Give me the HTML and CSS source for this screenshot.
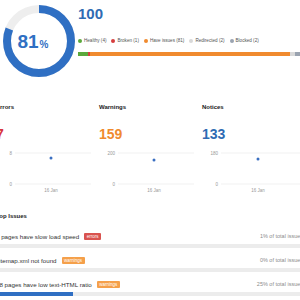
FILE: index.html
```html
<!DOCTYPE html>
<html lang="en">
<head>
  <meta charset="UTF-8" />
  <meta name="viewport" content="width=device-width, initial-scale=1" />
  <title>Site Audit Overview</title>
  <link rel="stylesheet" href="styles.css">
</head>
<body>
  <!-- Site health and crawled pages -->
  <div class="summary">
    <div class="donut">
      <svg width="72" height="72" viewBox="0 0 72 72">
        <circle cx="36" cy="36" r="32" fill="none" stroke="#eeeeee" stroke-width="8" />
        <circle cx="36" cy="36" r="32" fill="none" stroke="#2f6fc3" stroke-width="8"
                stroke-dasharray="162.86 201.06" transform="rotate(-90 36 36)" />
      </svg>
      <div class="donut-label">
        <span class="donut-value">81<span class="donut-unit">%</span></span>
      </div>
    </div>
    <div class="pages">
      <div class="pages-total">100</div>
      <div class="legend">
        <span class="legend-item"><i class="dot c-healthy"></i>Healthy (4)</span>
        <span class="legend-item"><i class="dot c-broken"></i>Broken (1)</span>
        <span class="legend-item"><i class="dot c-issues"></i>Have issues (81)</span>
        <span class="legend-item"><i class="dot c-redirected"></i>Redirected (2)</span>
        <span class="legend-item"><i class="dot c-blocked"></i>Blocked (2)</span>
      </div>
      <div class="pages-bar">
        <span class="c-healthy" style="width: 4.4%"></span>
        <span class="c-broken" style="width: 1.1%"></span>
        <span class="c-issues" style="width: 90%"></span>
        <span class="c-redirected" style="width: 2.2%"></span>
        <span class="c-blocked" style="width: 2.3%"></span>
      </div>
    </div>
  </div>

  <!-- Errors / warnings / notices -->
  <div class="stats">
    <div class="stat">
      <h3 class="stat-title">Errors</h3>
      <div class="stat-value errors">7</div>
      <svg class="stat-chart" width="103" height="50" viewBox="0 0 103 50">
        <line x1="19" y1="8" x2="95" y2="8" class="grid" />
        <line x1="19" y1="39" x2="95" y2="39" class="grid" />
        <text x="16" y="9.6" class="axis" text-anchor="end">8</text>
        <text x="16" y="40.6" class="axis" text-anchor="end">0</text>
        <text x="55" y="46.5" class="axis" text-anchor="middle">16 Jan</text>
        <circle cx="55" cy="13" r="1.5" class="point" />
      </svg>
    </div>
    <div class="stat">
      <h3 class="stat-title">Warnings</h3>
      <div class="stat-value warnings">159</div>
      <svg class="stat-chart" width="103" height="50" viewBox="0 0 103 50">
        <line x1="19" y1="8" x2="95" y2="8" class="grid" />
        <line x1="19" y1="39" x2="95" y2="39" class="grid" />
        <text x="16" y="9.6" class="axis" text-anchor="end">200</text>
        <text x="16" y="40.6" class="axis" text-anchor="end">0</text>
        <text x="55" y="46.5" class="axis" text-anchor="middle">16 Jan</text>
        <circle cx="55" cy="15" r="1.5" class="point" />
      </svg>
    </div>
    <div class="stat">
      <h3 class="stat-title">Notices</h3>
      <div class="stat-value notices">133</div>
      <svg class="stat-chart" width="103" height="50" viewBox="0 0 103 50">
        <line x1="19" y1="8" x2="103" y2="8" class="grid" />
        <line x1="19" y1="39" x2="103" y2="39" class="grid" />
        <text x="16" y="9.6" class="axis" text-anchor="end">180</text>
        <text x="16" y="40.6" class="axis" text-anchor="end">0</text>
        <text x="56" y="46.5" class="axis" text-anchor="middle">16 Jan</text>
        <circle cx="56" cy="14" r="1.5" class="point" />
      </svg>
    </div>
  </div>

  <!-- Top issues list -->
  <div class="top-issues">
    <h3 class="top-issues-title">Top Issues</h3>
    <div class="issue">
      <div class="issue-line">
        <span class="issue-text">1 pages have slow load speed</span>
        <span class="badge errors">errors</span>
        <span class="issue-share">1% of total issues</span>
      </div>
      <div class="issue-bar"><span class="issue-fill" style="width: 1%"></span></div>
    </div>
    <div class="issue">
      <div class="issue-line">
        <span class="issue-text">sitemap.xml not found</span>
        <span class="badge warnings">warnings</span>
        <span class="issue-share">0% of total issues</span>
      </div>
      <div class="issue-bar"><span class="issue-fill" style="width: 0%"></span></div>
    </div>
    <div class="issue">
      <div class="issue-line">
        <span class="issue-text">18 pages have low text-HTML ratio</span>
        <span class="badge warnings">warnings</span>
        <span class="issue-share">25% of total issues</span>
      </div>
      <div class="issue-bar"><span class="issue-fill" style="width: 25%"></span></div>
    </div>
  </div>
</body>
</html>
```

FILE: styles.css
```css
/* Global Styles */
html, body {
  margin: 0;
  padding: 0;
  background: #ffffff;
  font-family: "Liberation Sans", Arial, sans-serif;
  color: #333333;
  overflow: hidden;
}

/* Top summary: health donut and crawled pages */
.summary {
  display: flex;
  align-items: flex-start;
  gap: 3px;
  padding: 5px 0 0 3px;
}

.donut {
  position: relative;
  flex: none;
  width: 72px;
  height: 72px;
}

.donut svg {
  display: block;
}

.donut-label {
  position: absolute;
  inset: 0;
  display: flex;
  align-items: center;
  justify-content: center;
  padding-right: 12px;
  padding-top: 1px;
  color: #2f6fc3;
  font-weight: bold;
}

.donut-value {
  font-size: 19px;
  line-height: 1;
}

.donut-unit {
  font-size: 10px;
  margin-left: 1px;
}

.pages {
  flex: 1;
  min-width: 0;
  padding-top: 1px;
}

.pages-total {
  font-size: 15px;
  line-height: 15px;
  font-weight: bold;
  color: #2f6bb3;
}

.legend {
  display: flex;
  gap: 5px;
  margin-top: 17px;
  font-size: 4.6px;
  line-height: 6px;
  color: #555555;
  white-space: nowrap;
}

.legend-item {
  display: flex;
  align-items: center;
}

.dot {
  width: 4px;
  height: 4px;
  border-radius: 50%;
  margin-right: 2px;
}

.pages-bar {
  display: flex;
  height: 4px;
  margin-top: 8px;
}

.c-healthy { background: #5aa83c; }
.c-broken { background: #d63e3e; }
.c-issues { background: #f08a2e; }
.c-redirected { background: #d8d8d8; }
.c-blocked { background: #9aa3b0; }

/* Errors / warnings / notices */
.stats {
  display: grid;
  grid-template-columns: repeat(3, 103px);
  margin: 26px 0 0 -4px;
}

.stat-title {
  margin: 0;
  font-size: 6px;
  line-height: 8px;
  font-weight: bold;
  color: #222222;
}

.stat-value {
  margin-top: 16px;
  font-size: 14px;
  line-height: 14px;
  font-weight: bold;
}

.stat-value.errors { color: #d9363e; }
.stat-value.warnings { color: #f08a2e; }
.stat-value.notices { color: #2f6bb3; }

.stat-chart {
  display: block;
  margin-top: 4px;
}

.stat-chart .grid {
  stroke: #e8e8e8;
  stroke-width: 0.6;
}

.stat-chart .axis {
  font-family: "Liberation Sans", Arial, sans-serif;
  font-size: 4.5px;
  fill: #999999;
}

.stat-chart .point {
  fill: #3a6fc1;
}

/* Top issues */
.top-issues {
  width: 307px;
  margin: 17px 0 0 -4px;
}

.top-issues-title {
  margin: 0 0 12px;
  font-size: 6px;
  line-height: 8px;
  font-weight: bold;
  color: #222222;
}

.issue {
  margin-bottom: 8px;
}

.issue-line {
  display: flex;
  align-items: center;
  height: 8px;
  white-space: nowrap;
}

.issue-text {
  font-size: 6.2px;
  color: #333333;
}

.badge {
  margin-left: 5px;
  padding: 0 2.5px;
  height: 7px;
  line-height: 7px;
  font-size: 4.5px;
  color: #ffffff;
  border-radius: 1px;
}

.badge.errors { background: #d9534f; }
.badge.warnings { background: #f5a04a; }

.issue-share {
  margin-left: auto;
  font-size: 5.5px;
  color: #8c8c8c;
}

.issue-bar {
  margin-top: 4px;
  height: 4px;
  background: #ececec;
}

.issue-fill {
  display: block;
  height: 100%;
  background: #2f6fc3;
}
```
